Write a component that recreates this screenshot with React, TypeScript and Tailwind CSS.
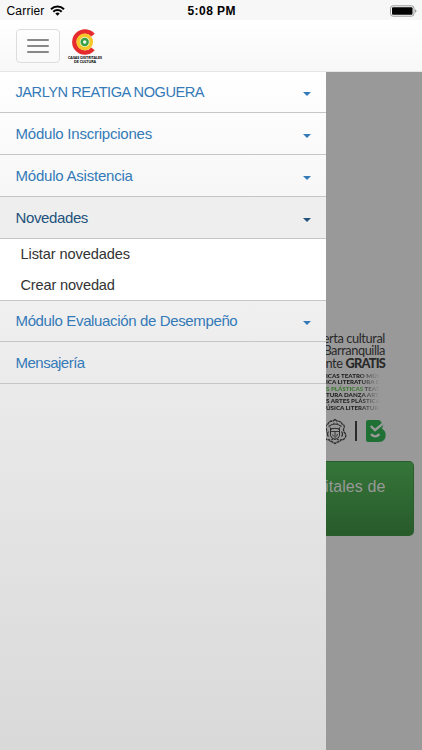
import clsx from "clsx";

type MenuItem = {
  label: string;
  height: string;
  tracking: string;
  caret?: boolean;
  active?: boolean;
  children?: { label: string; tracking: string }[];
};

const menu: MenuItem[] = [
  { label: "JARLYN REATIGA NOGUERA", height: "h-[41px]", tracking: "text-[14.6px] tracking-[-0.47px]", caret: true },
  { label: "Módulo Inscripciones", height: "h-[42px]", tracking: "tracking-[-0.22px]", caret: true },
  { label: "Módulo Asistencia", height: "h-[42px]", tracking: "tracking-[-0.22px]", caret: true },
  {
    label: "Novedades",
    height: "h-[42px]",
    tracking: "tracking-[-0.38px]",
    caret: true,
    active: true,
    children: [
      { label: "Listar novedades", tracking: "tracking-[-0.1px]" },
      { label: "Crear novedad", tracking: "tracking-[-0.18px]" },
    ],
  },
  { label: "Módulo Evaluación de Desempeño", height: "h-[41px]", tracking: "tracking-[-0.36px]", caret: true },
  { label: "Mensajería", height: "h-[42px]", tracking: "tracking-[-0.5px]" },
];

function StatusBar() {
  return (
    <div className="grid h-5 grid-cols-3 items-center bg-[#f7f7f7] pt-px pl-[6.5px] pr-[5px] text-[12px] text-black">
      <div className="flex items-center gap-[5px]">
        <span className="tracking-[0.2px]">Carrier</span>
        <svg className="h-[11px] w-[15px]" viewBox="0 0 15 11">
          <path d="M1 4.3a9.2 9.2 0 0 1 13 0M3.3 6.8a6 6 0 0 1 8.4 0" fill="none" stroke="#000" strokeWidth="2" />
          <path d="M5.3 8.5a3.2 3.2 0 0 1 4.4 0L7.5 10.8z" />
        </svg>
      </div>
      <span className="text-center font-semibold tracking-[0.45px]">5:08 PM</span>
      <svg className="h-3 w-[27px] justify-self-end" viewBox="0 0 27 12">
        <rect x=".5" y=".8" width="23.5" height="10.4" rx="2.5" fill="none" stroke="#999" />
        <rect x="2" y="2.3" width="20.5" height="7.4" rx="1" />
        <path d="M25 4.2q1.5.5 1.5 1.8T25 7.8z" fill="#999" />
      </svg>
    </div>
  );
}

function BrandLogo() {
  return (
    <svg className="h-[36px] w-[36px]" viewBox="0 0 36 36">
      <path d="M26 6.1A10.6 10.6 0 1 0 26 19.9" fill="none" stroke="#e52b2d" strokeWidth="4.5" />
      <circle cx="17.7" cy="13" r="6.5" fill="none" stroke="#f5c72b" strokeWidth="3.8" />
      <circle cx="17.7" cy="13" r="4.9" fill="#eef3c8" />
      <circle cx="17.7" cy="13" r="4.2" fill="#38a047" />
      <circle cx="17.7" cy="13" r="1.7" fill="#f4fbe9" />
      <text x="1" y="30.3" textLength="34" lengthAdjust="spacingAndGlyphs" className="font-['Lato',sans-serif] text-[4.4px] font-black">
        CASAS DISTRITALES
      </text>
      <text x="7" y="34.2" textLength="22" lengthAdjust="spacingAndGlyphs" className="font-['Lato',sans-serif] text-[4.4px] font-black">
        DE CULTURA
      </text>
    </svg>
  );
}

function Navbar() {
  return (
    <header className="flex h-[52px] items-start border-b border-[#e5e5e5] bg-linear-to-b from-white to-[#f8f8f8] pl-4">
      <button className="mt-[9px] flex h-[34px] w-[44px] flex-col items-center justify-center gap-1 rounded-[4px] border border-[#ddd]">
        <span className="h-0.5 w-[22px] rounded-[1px] bg-[#888]" />
        <span className="h-0.5 w-[22px] rounded-[1px] bg-[#888]" />
        <span className="h-0.5 w-[22px] rounded-[1px] bg-[#888]" />
      </button>
      <div className="ml-[7px] mt-[9px]">
        <BrandLogo />
      </div>
    </header>
  );
}

function Drawer() {
  return (
    <nav className="w-[326px] shrink-0 bg-linear-to-b from-white via-[#eae9ea] via-50% to-[#dad9da] text-[15px]">
      {menu.map((item) => (
        <div key={item.label}>
          <a
            className={clsx(
              "flex items-center justify-between border-b border-[#c6c6c6] pt-px pl-[15.5px] pr-[15px]",
              item.height,
              item.active ? "bg-[#eee] text-[#23527c]" : "text-[#337ab7]",
            )}
          >
            <span className={item.tracking}>{item.label}</span>
            {item.caret && (
              <span className="mt-[3px] border-x-4 border-t-4 border-x-transparent border-t-current" />
            )}
          </a>
          {item.children && (
            <ul className="h-[62px] border-b border-[#c6c6c6] bg-white pl-[20.5px] text-[14.6px] leading-[30.5px] text-[#333]">
              {item.children.map((child) => (
                <li key={child.label} className={child.tracking}>
                  {child.label}
                </li>
              ))}
            </ul>
          )}
        </div>
      ))}
    </nav>
  );
}

function CityCrest() {
  return (
    <svg className="-ml-[3px] h-[27px] w-[24px] shrink-0" viewBox="0 0 24 27" fill="none" stroke="#2b2b2b">
      {/* scrollwork frame */}
      <path d="M12 1.500L14 3Q18 3 19 6Q22 7 21 10Q20 12 21 14Q24 17 22 20Q20 22.500 18 21.500Q17 24 14.500 24L12 25.500L9.500 24Q7 24 6 21.500Q4 22.500 2 20Q0 17 3 14Q4 12 3 10Q2 7 5 6Q6 3 10 3Z" strokeWidth="1.3" strokeDasharray="3 .5" />
      {/* ribbon and shield */}
      <path d="M5.500 8.500Q12 3.500 18.500 8.500M7 9.500L8.500 11.500M17 9.500L15.500 11.500" strokeWidth="1.2" />
      <path d="M7.500 11Q12 9.500 16.500 11V17.500Q16 20.500 12 21.500Q8 20.500 7.500 17.500Z" strokeWidth="1" />
      <path d="M8 13.500H16M12 13.500V21M9.500 16.500L10.500 18.500M14.500 16L13.500 18.500M10 6L11.500 5M13.500 5L15 6" strokeWidth=".9" />
      <path d="M18.500 13.500Q20.500 16.500 18.500 18.500M5.500 13.500Q3.500 16.500 5.500 18.500M8 22L10 21.500M16 22L14 21.500" strokeWidth="1.2" />
    </svg>
  );
}

function CityMark() {
  return (
    <svg className="h-[22px] w-5" viewBox="0 0 20 22">
      <path d="M2 0H12.500Q15 0 15.300 2.500L17.500 4L16 8.800Q19.700 10.800 19.700 15Q19.500 22 13 22H2Q0 22 0 20V2Q0 0 2 0Z" fill="#1e7034" />
      <path d="M4.800 6L9 10.200L18 2.800" fill="none" stroke="#999" strokeWidth="2.400" />
      <path d="M5 14.200Q9.200 18.500 13.500 14.200" fill="none" stroke="#999" strokeWidth="2.400" />
    </svg>
  );
}

const artLines = [
  { green: "", text: "ICAS TEATRO MÚSI" },
  { green: "", text: "ICA LITERATURA DA" },
  { green: "S PLÁSTICAS", text: " TEATR" },
  { green: "", text: "TURA DANZA ARTE" },
  { green: "", text: "S ARTES PLÁSTICAS" },
  { green: "", text: "ÚSICA LITERATURA" },
];

function Content() {
  return (
    <main className="flex w-24 flex-col overflow-hidden bg-[#999]">
      <div className="mt-[260px] flex h-[37px] flex-col items-end pr-[37px] font-['Lato',sans-serif] text-[12.8px] leading-[12.4px] text-[#292929]">
        <span className="whitespace-nowrap tracking-[-0.4px]">erta cultural</span>
        <span className="whitespace-nowrap tracking-[-0.45px]">Barranquilla</span>
        <span className="whitespace-nowrap tracking-[-0.4px]">
          nte <b className="font-black tracking-[-0.8px]">GRATIS</b>
        </span>
      </div>
      <div className="mt-[4px] h-[41px] w-[55px] overflow-hidden mask-r-from-60% mask-r-to-98% font-['Lato',sans-serif] text-[6.2px] font-black leading-[6.35px] text-[#222]">
        {artLines.map((line) => (
          <p key={line.text} className="whitespace-nowrap">
            {line.green && <span className="text-[#3d7a32]">{line.green}</span>}
            {line.text}
          </p>
        ))}
      </div>
      <div className="mt-[3px] flex h-[28px] items-center">
        <CityCrest />
        <span className="ml-[8px] h-5 w-0.5 bg-[#2b2b2b]" />
        <span className="ml-[9px]">
          <CityMark />
        </span>
      </div>
      <div className="mt-4 flex h-[75px] w-[88px] justify-end rounded-r-[5px] border border-l-0 border-[#285e2b] bg-linear-to-b from-[#35753a] to-[#285b2a] pr-[27.5px] pt-[15px] text-[16px] leading-5 text-[#999]">
        <span className="whitespace-nowrap tracking-[0.1px]">itales de</span>
      </div>
    </main>
  );
}

export default function App() {
  return (
    <div className="flex h-[750px] w-[422px] flex-col overflow-hidden bg-[#999] font-['Liberation_Sans',Arial,sans-serif]">
      <StatusBar />
      <Navbar />
      <div className="flex min-h-0 flex-1">
        <Drawer />
        <Content />
      </div>
    </div>
  );
}
